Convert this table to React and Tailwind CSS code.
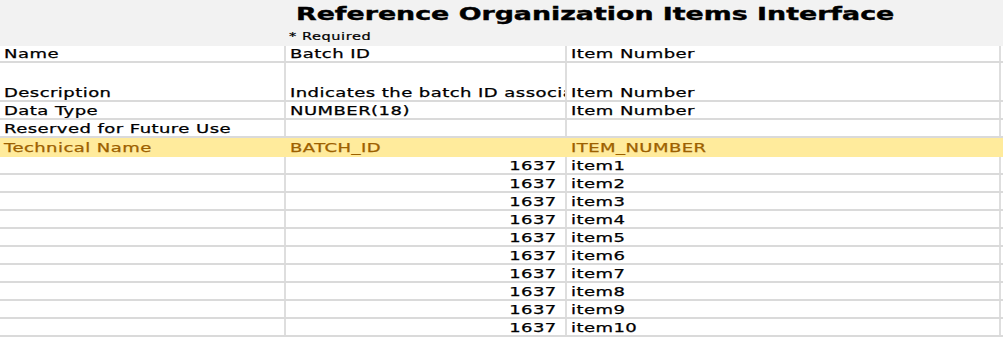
import React from "react";

const font = { fontFamily: "'DejaVu Sans', sans-serif" };

const rows = [
  { h: "h-[17px]", c: ["Name", "Batch ID", "Item Number"] },
  { h: "h-[39px]", c: ["Description", "Indicates the batch ID associated with the item", "Item Number"] },
  { h: "h-[18px]", c: ["Data Type", "NUMBER(18)", "Item Number"] },
  { h: "h-[18px]", c: ["Reserved for Future Use", "", ""] },
];

const items = Array.from({ length: 10 }, (_, i) => `item${i + 1}`);

// stretched, spreadsheet-like text
const Txt = ({ children, right }) => (
  <span
    className={
      right
        ? "inline-block origin-right scale-x-[1.5] tracking-[0.3px] whitespace-nowrap leading-none [-webkit-text-stroke:0.25px]"
        : "inline-block origin-left scale-x-[1.5] tracking-[0.3px] whitespace-nowrap leading-none [-webkit-text-stroke:0.25px]"
    }
  >
    {children}
  </span>
);

const Cell = ({ w, children, right, yellow }) => (
  <div
    className={`${w} shrink-0 flex items-end overflow-hidden pb-[1px] border-r-2 ${
      yellow ? "border-[#ffeb9c]" : "border-[#dedede]"
    } ${right ? "justify-end pr-[8px]" : "pl-[4px]"}`}
  >
    {children}
  </div>
);

const Row = ({ h, cells, yellow, numberRow }) => (
  <div
    className={`flex ${h} border-b-2 ${
      yellow ? "bg-[#ffeb9c] text-[#9c6000] border-[#ffeb9c]" : "border-[#dadada]"
    }`}
  >
    <Cell w="w-[286px]" yellow={yellow}>
      <Txt>{cells[0]}</Txt>
    </Cell>
    <Cell w="w-[281px]" yellow={yellow} right={numberRow}>
      <Txt right={numberRow}>{cells[1]}</Txt>
    </Cell>
    <Cell w="w-[434px]" yellow={yellow}>
      <Txt>{cells[2]}</Txt>
    </Cell>
    <div className="flex-1" />
  </div>
);

export default function App() {
  return (
    <div className="w-[1008px] h-[339px] overflow-hidden bg-white text-black text-[12px]" style={font}>
      <div className="w-[1003px]">
        {/* title block */}
        <div className="bg-[#f2f2f2] h-[46px] flex flex-col">
          <div className="h-[28px] flex items-center pl-[296px]">
            <span className="inline-block origin-left scale-x-[1.49] font-bold text-[18px] leading-none whitespace-nowrap [-webkit-text-stroke:0.4px]">
              Reference Organization Items Interface
            </span>
          </div>
          <div className="h-[18px] flex items-center pl-[289px]">
            <span className="inline-block origin-left scale-x-[1.45] tracking-[0.4px] text-[10px] leading-none whitespace-nowrap [-webkit-text-stroke:0.2px]">
              * Required
            </span>
          </div>
        </div>

        {rows.map((r, i) => (
          <Row key={i} h={r.h} cells={r.c} />
        ))}
        <Row h="h-[19px]" cells={["Technical Name", "BATCH_ID", "ITEM_NUMBER"]} yellow />
        {items.map((it) => (
          <Row key={it} h="h-[18px]" cells={["", "1637", it]} numberRow />
        ))}
      </div>
    </div>
  );
}
